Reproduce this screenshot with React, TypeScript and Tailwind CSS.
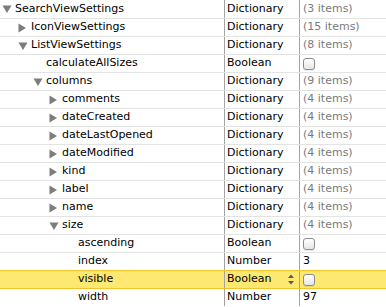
import React from 'react';

type Row = {
  name: string;
  level: number;
  disclosure?: 'open' | 'closed';
  type: string;
  value?: string;
  check?: boolean;
  selected?: boolean;
};

const rows: Row[] = [
  { name: 'SearchViewSettings', level: 0, disclosure: 'open', type: 'Dictionary', value: '(3 items)' },
  { name: 'IconViewSettings', level: 1, disclosure: 'closed', type: 'Dictionary', value: '(15 items)' },
  { name: 'ListViewSettings', level: 1, disclosure: 'open', type: 'Dictionary', value: '(8 items)' },
  { name: 'calculateAllSizes', level: 2, type: 'Boolean', check: true },
  { name: 'columns', level: 2, disclosure: 'open', type: 'Dictionary', value: '(9 items)' },
  { name: 'comments', level: 3, disclosure: 'closed', type: 'Dictionary', value: '(4 items)' },
  { name: 'dateCreated', level: 3, disclosure: 'closed', type: 'Dictionary', value: '(4 items)' },
  { name: 'dateLastOpened', level: 3, disclosure: 'closed', type: 'Dictionary', value: '(4 items)' },
  { name: 'dateModified', level: 3, disclosure: 'closed', type: 'Dictionary', value: '(4 items)' },
  { name: 'kind', level: 3, disclosure: 'closed', type: 'Dictionary', value: '(4 items)' },
  { name: 'label', level: 3, disclosure: 'closed', type: 'Dictionary', value: '(4 items)' },
  { name: 'name', level: 3, disclosure: 'closed', type: 'Dictionary', value: '(4 items)' },
  { name: 'size', level: 3, disclosure: 'open', type: 'Dictionary', value: '(4 items)' },
  { name: 'ascending', level: 4, type: 'Boolean', check: true },
  { name: 'index', level: 4, type: 'Number', value: '3' },
  { name: 'visible', level: 4, type: 'Boolean', check: true, selected: true },
  { name: 'width', level: 4, type: 'Number', value: '97' },
];

const Triangle = ({ open }: { open: boolean }) =>
  open ? (
    <svg width="10" height="8" viewBox="0 0 10 8" className="shrink-0">
      <path d="M0.5 0.5 L9.5 0.5 L5 8 Z" fill="#7d7d7d" />
    </svg>
  ) : (
    <svg width="8" height="10" viewBox="0 0 8 10" className="shrink-0">
      <path d="M0.5 0.5 L8 5 L0.5 9.5 Z" fill="#7d7d7d" />
    </svg>
  );

const CheckBox = () => (
  <span className="block w-[12px] h-[12px] rounded-[3px] border border-[#8c8c8c] bg-gradient-to-b from-white to-[#e6e6e6] shadow-[0_1px_0_rgba(0,0,0,0.08)]" />
);

const Stepper = () => (
  <svg width="6" height="11" viewBox="0 0 6 11" className="shrink-0">
    <path d="M0 4 L3 0.5 L6 4 Z" fill="#5a5a5a" />
    <path d="M0 7 L3 10.5 L6 7 Z" fill="#5a5a5a" />
  </svg>
);

export default function App() {
  return (
    <div
      className="w-[386px] h-[307px] bg-white overflow-hidden text-[11px] text-black"
      style={{ fontFamily: '"DejaVu Sans", "Liberation Sans", sans-serif' }}
    >
      {rows.map((r, i) => {
        const topBorder =
          i === 0 ? 'border-t-0' : r.selected || rows[i - 1].selected ? 'border-t border-[#f4c22b]' : 'border-t border-[#e3e3e3]';
        return (
          <div
            key={r.name}
            className={`flex items-stretch h-[18px] ${topBorder} ${r.selected ? 'bg-[#fde971]' : ''}`}
          >
            <div className="w-[225px] shrink-0 flex items-center border-r border-[#a3a3a3]">
              <div
                className="flex items-center"
                style={{ paddingLeft: Math.round(2 + r.level * 15.7) }}
              >
                <span className="w-[13px] flex items-center">
                  {r.disclosure && <Triangle open={r.disclosure === 'open'} />}
                </span>
                <span className="whitespace-nowrap">{r.name}</span>
              </div>
            </div>
            <div className="w-[75px] shrink-0 flex items-center justify-between pl-[2px] pr-[5px] border-r border-[#a3a3a3]">
              <span>{r.type}</span>
              {r.selected && <Stepper />}
            </div>
            <div className="flex-1 flex items-center pl-[3px]">
              {r.check ? (
                <CheckBox />
              ) : (
                <span className={r.value?.startsWith('(') ? 'text-[#7b7b7b]' : ''}>{r.value}</span>
              )}
            </div>
          </div>
        );
      })}
    </div>
  );
}
